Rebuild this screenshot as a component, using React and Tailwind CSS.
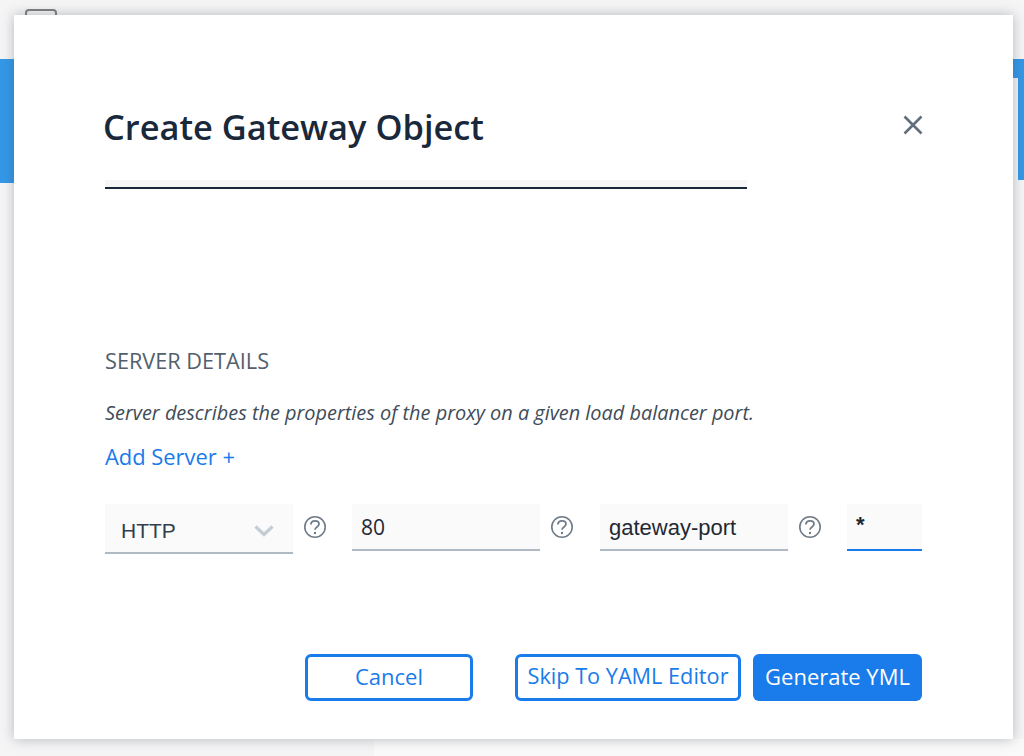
import React from "react";

const HelpIcon = () => (
  <svg width="24" height="24" viewBox="0 0 24 24" fill="none" className="shrink-0">
    <circle cx="12" cy="12" r="10.2" stroke="#6f7b88" strokeWidth="1.6" />
    <path
      d="M8 9.4c0-2.2 1.7-3.6 4-3.6s4 1.3 4 3.3c0 2.9-4 2.7-4 5.7"
      stroke="#6f7b88"
      strokeWidth="1.8"
    />
    <circle cx="12" cy="18" r="1.2" fill="#6f7b88" />
  </svg>
);

const Field = ({ value, active, className }) => (
  <div
    className={`h-[47px] bg-[#fafafa] border-b-2 pl-[9px] leading-[30px] text-[#1f2933] ${
      active ? "border-[#1a7bea]" : "border-[#b0bac5]"
    } ${className}`}
  >
    {value}
  </div>
);

export default function App() {
  return (
    <div className="relative h-[756px] w-[1024px] overflow-hidden bg-[#f5f5f6] font-['Open_Sans',sans-serif]">
      {/* Page behind the modal */}
      <div className="pt-[59px]">
        <div className="h-[19px] bg-[#3498e8]" />
        <div className="flex h-[102px] justify-between">
          <div className="h-[105px] w-[14px] bg-[#3498e8]" />
          <div className="h-[102px] w-[6px] bg-[#3498e8]" />
        </div>
      </div>
      <div className="absolute left-[25px] top-[9px] h-[16px] w-[32px] rounded-[4px] border-2 border-[#808080]" />
      <div className="absolute left-[374px] top-[739px] h-[17px] w-[650px] bg-[#fafafa]" />

      {/* Modal */}
      <div className="absolute left-[14px] top-[15px] h-[724px] w-[999px] bg-white pl-[91px] pr-[91px] shadow-[0_0_12px_rgba(60,70,80,0.35)]">
        <div className="flex items-start justify-between pt-[88px]">
          <h1 className="-ml-[2px] text-[34.4px] font-semibold leading-[48px] text-[#19283a]">
            Create Gateway Object
          </h1>
          <svg width="20" height="20" viewBox="0 0 20 20" className="mt-[12px] translate-x-[1px]" fill="none">
            <path d="M1.5 1.5l17 17M18.5 1.5l-17 17" stroke="#616e7c" strokeWidth="2.6" />
          </svg>
        </div>

        <div className="mt-[29px] h-[9px] w-[642px] border-b-2 border-[#19283a] bg-[#f7f7f7]" />

        <div className="mt-[157px] text-[21.7px] leading-[30px] text-[#52606d]">SERVER DETAILS</div>
        <p className="mt-[24px] text-[19.9px] italic leading-[26px] text-[#3e4c59]">
          Server describes the properties of the proxy on a given load balancer port.
        </p>
        <a className="mt-[16px] block text-[21.9px] leading-[30px] text-[#1a7bea]">Add Server +</a>

        <div className="mt-[32px] flex items-start">
          <div className="relative flex h-[50px] w-[188px] items-center border-b-2 border-[#b0bac5] bg-[#fafafa] pl-[16px] pt-[5px] font-['Liberation_Sans',sans-serif] text-[21px] text-[#323f4b]">
            HTTP
            <svg width="20" height="12" viewBox="0 0 20 12" className="absolute right-[19px] top-[21px]" fill="none">
              <path d="M1.5 1.5L10 9.5l8.5-8" stroke="#c4ccd4" strokeWidth="3.2" />
            </svg>
          </div>
          <div className="ml-[10px] mr-[25px] mt-[11px]"><HelpIcon /></div>
          <Field value="80" className="w-[188px] pt-[8px] text-[21px]" />
          <div className="ml-[10px] mr-[26px] mt-[11px]"><HelpIcon /></div>
          <Field value="gateway-port" className="w-[188px] pt-[9px] font-['Liberation_Sans',sans-serif] text-[22px]" />
          <div className="ml-[10px] mr-[25px] mt-[11px]"><HelpIcon /></div>
          <Field value="*" active className="w-[75px] pt-[6px] font-['Liberation_Sans',sans-serif] text-[22px] font-bold" />
        </div>

        <div className="mt-[100px] flex items-start justify-end">
          <button className="h-[47px] w-[168px] rounded-[6px] border-[3px] border-[#1a7bea] bg-white pb-[2px] text-[22px] text-[#1a7bea]">
            Cancel
          </button>
          <button className="ml-[42px] h-[47px] w-[226px] rounded-[6px] border-[3px] border-[#1a7bea] bg-white pb-[2px] text-[21.7px] text-[#1a7bea]">
            Skip To YAML Editor
          </button>
          <button className="ml-[12px] h-[47px] w-[169px] rounded-[6px] bg-[#1a7bea] pb-[2px] text-[22px] text-white">
            Generate YML
          </button>
        </div>
      </div>
    </div>
  );
}
